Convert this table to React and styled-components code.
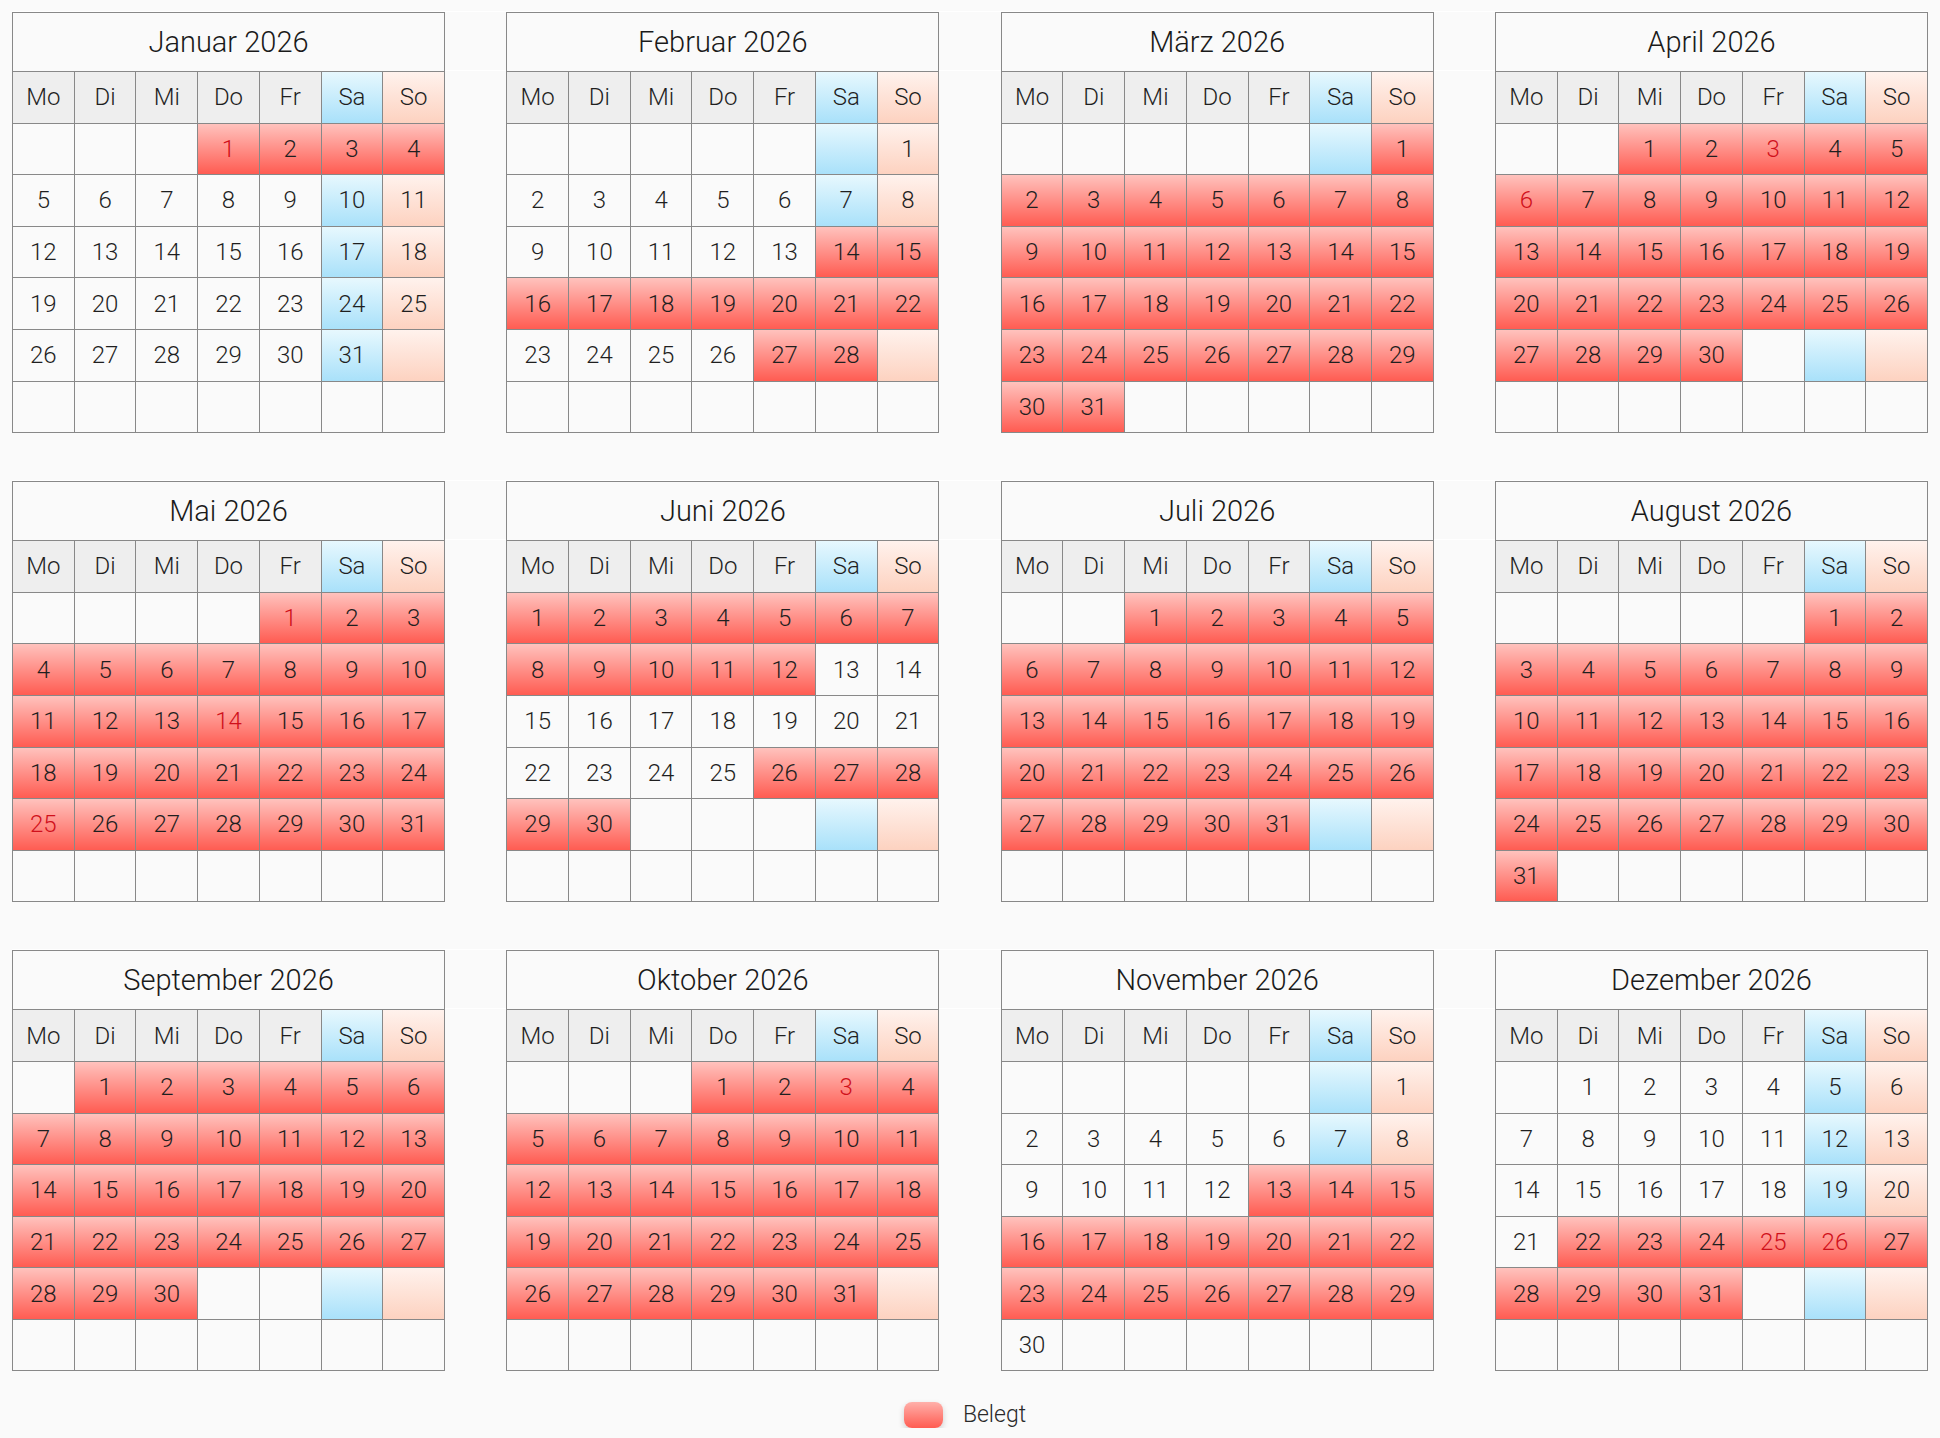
import React from 'react';
import styled, { createGlobalStyle, css } from 'styled-components';

const GlobalStyle = createGlobalStyle`
  html, body {
    margin: 0;
    padding: 0;
    background: #fafafa;
  }
  body {
    font-family: Roboto, "Liberation Sans", sans-serif;
    font-weight: 300;
    color: #222;
  }
`;

const MONTHS = [
  'Januar', 'Februar', 'März', 'April', 'Mai', 'Juni',
  'Juli', 'August', 'September', 'Oktober', 'November', 'Dezember'
];

const WEEKDAYS = ['Mo', 'Di', 'Mi', 'Do', 'Fr', 'Sa', 'So'];

// belegte Tage je Monat als [von, bis]
const BOOKED = [
  [[1, 4]],
  [[14, 22], [27, 28]],
  [[1, 31]],
  [[1, 30]],
  [[1, 31]],
  [[1, 12], [26, 30]],
  [[1, 31]],
  [[1, 31]],
  [[1, 30]],
  [[1, 31]],
  [[13, 29]],
  [[22, 31]]
];

const HOLIDAYS = {
  0: [1],
  3: [3, 6],
  4: [1, 14, 25],
  9: [3],
  11: [25, 26]
};

// Wochenenden ohne Färbung
const PLAIN = {
  5: [13, 14, 20, 21]
};

const YEAR = 2026;

const Page = styled.div`
  padding: 11px 12px 0;
`;

const Year = styled.div`
  display: flex;
  flex-direction: column;
  gap: 47px;
`;

const Quarter = styled.div`
  display: flex;
  justify-content: space-between;
  background:
    linear-gradient(#fff, #fff) 0 0 / 100% 1px no-repeat,
    linear-gradient(#fff, #fff) 0 59px / 100% 1px no-repeat;
  padding-top: 1px;
`;

const Month = styled.div`
  width: 433px;
  display: grid;
  grid-template-columns: repeat(7, 1fr);
  grid-template-rows: 59px repeat(7, 51.6px);
  border-left: 1px solid #888;
  border-top: 1px solid #888;
  box-sizing: border-box;
`;

const Title = styled.div`
  grid-column: 1 / -1;
  display: flex;
  align-items: center;
  justify-content: center;
  font-size: 29px;
  border-right: 1px solid #888;
  border-bottom: 1px solid #888;
  background: #fafafa;
  color: #1a1a1a;
`;

const variants = {
  booked: css`
    background: linear-gradient(#ffc2bd, #ff5c52);
  `,
  sat: css`
    background: linear-gradient(#e7f8fe, #a9e1fa);
  `,
  sun: css`
    background: linear-gradient(#fff2ed, #fdd2c0);
  `,
  head: css`
    background: #eeeeee;
  `,
  plain: css`
    background: #fafafa;
  `
};

const Cell = styled.div`
  display: flex;
  align-items: center;
  justify-content: center;
  font-size: 24px;
  border-right: 1px solid #888;
  border-bottom: 1px solid #888;
  color: ${p => (p.$holiday ? '#d0101b' : '#1f1f1f')};
  ${p => variants[p.$variant || 'plain']}
`;

const Legend = styled.div`
  display: flex;
  align-items: center;
  justify-content: center;
  gap: 20px;
  margin-top: 30px;
  padding-right: 10px;
`;

const Swatch = styled.span`
  width: 39px;
  height: 26px;
  border-radius: 8px;
  background: linear-gradient(#ffb0aa, #ff5c52);
  box-shadow: 0 3px 6px rgba(0, 0, 0, 0.18);
`;

const LegendLabel = styled.span`
  font-size: 23px;
  color: #2a2a2a;
`;

const inRanges = (ranges, d) => ranges.some(([a, b]) => d >= a && d <= b);

const buildCells = (m) => {
  const offset = (new Date(YEAR, m, 1).getDay() + 6) % 7;
  const count = new Date(YEAR, m + 1, 0).getDate();
  const cells = [];
  for (let i = 0; i < 42; i++) {
    const row = Math.floor(i / 7);
    const col = i % 7;
    const day = i - offset + 1;
    const valid = day >= 1 && day <= count;
    let variant = 'plain';
    if (valid && inRanges(BOOKED[m], day)) {
      variant = 'booked';
    } else if (row < 5 && !(valid && (PLAIN[m] || []).includes(day))) {
      if (col === 5) variant = 'sat';
      if (col === 6) variant = 'sun';
    }
    cells.push({
      key: i,
      day: valid ? day : '',
      variant,
      holiday: valid && (HOLIDAYS[m] || []).includes(day)
    });
  }
  return cells;
};

const MonthCard = ({ m }) => (
  <Month>
    <Title>{MONTHS[m]} {YEAR}</Title>
    {WEEKDAYS.map((w, i) => (
      <Cell key={w} $variant={i === 5 ? 'sat' : i === 6 ? 'sun' : 'head'}>{w}</Cell>
    ))}
    {buildCells(m).map(c => (
      <Cell key={c.key} $variant={c.variant} $holiday={c.holiday}>{c.day}</Cell>
    ))}
  </Month>
);

const App = () => (
  <>
    <GlobalStyle />
    <Page>
      <Year>
        {[0, 1, 2].map(q => (
          <Quarter key={q}>
            {[0, 1, 2, 3].map(i => <MonthCard key={i} m={q * 4 + i} />)}
          </Quarter>
        ))}
      </Year>
      <Legend>
        <Swatch />
        <LegendLabel>Belegt</LegendLabel>
      </Legend>
    </Page>
  </>
);

export default App;
